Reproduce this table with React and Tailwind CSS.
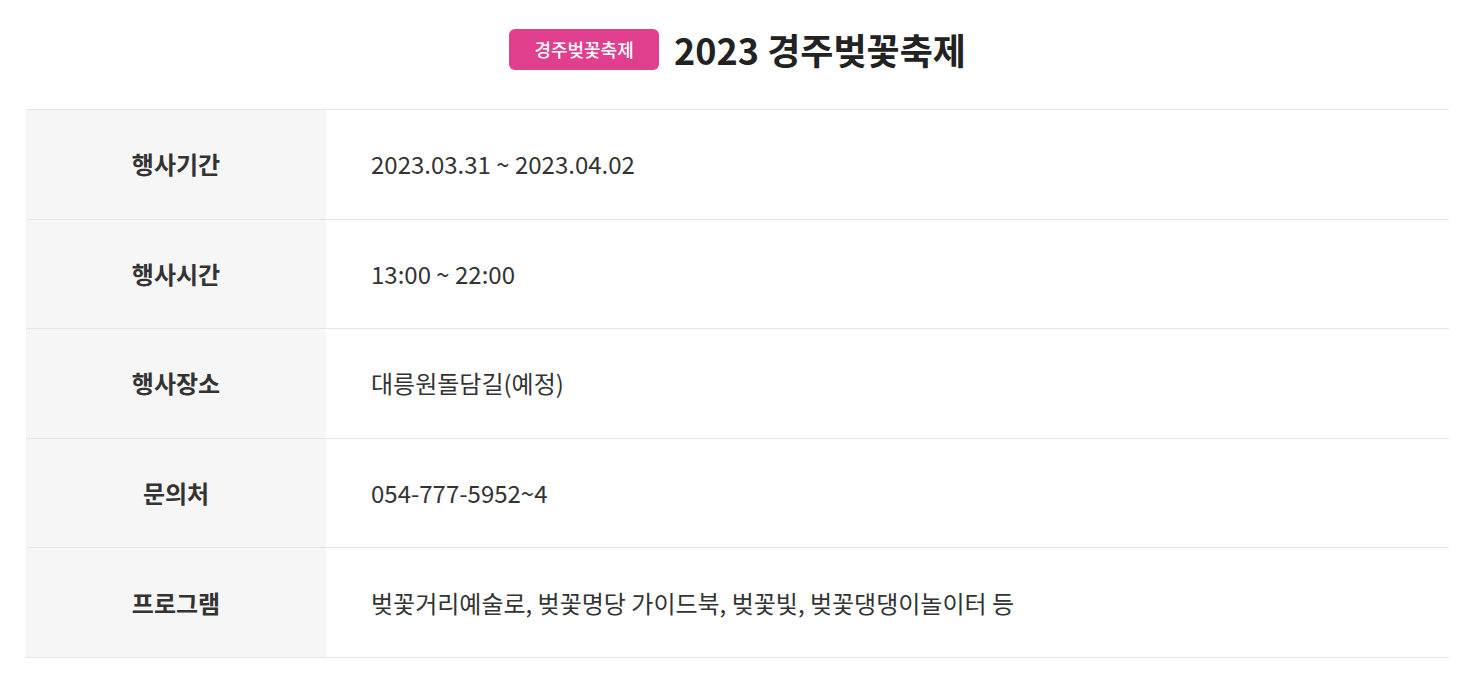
const rows = [
  { label: '행사기간', value: '2023.03.31 ~ 2023.04.02' },
  { label: '행사시간', value: '13:00 ~ 22:00' },
  { label: '행사장소', value: '대릉원돌담길(예정)' },
  { label: '문의처', value: '054-777-5952~4' },
  { label: '프로그램', value: '벚꽃거리예술로, 벚꽃명당 가이드북, 벚꽃빛, 벚꽃댕댕이놀이터 등' },
];

export default function App() {
  return (
    <div
      className="w-full min-h-[688px] bg-white pt-[29px] pl-[26px] pr-[15px]"
      style={{ fontFamily: '"Noto Sans CJK KR", "Noto Sans", sans-serif' }}
    >
      {/* Title */}
      <div className="flex items-center justify-center gap-[15px]">
        <span className="flex items-center justify-center w-[150px] h-[41px] rounded-[6px] bg-[#e03f8f] text-white text-[18px] font-medium">
          경주벚꽃축제
        </span>
        <h1 className="text-[36px] font-bold text-[#222] leading-[41px]">2023 경주벚꽃축제</h1>
      </div>

      {/* Info table */}
      <div className="mt-[39px] border-t border-[#e5e5e5]">
        {rows.map((row) => (
          <div key={row.label} className="flex h-[109.6px] border-b border-[#e5e5e5]">
            <div className="w-[300px] shrink-0 bg-[#f6f6f6] flex items-center justify-center text-[24px] font-bold text-[#333]">
              {row.label}
            </div>
            <div className="flex-1 flex items-center pl-[45px] text-[24px] text-[#333]">
              {row.value}
            </div>
          </div>
        ))}
      </div>
    </div>
  );
}
